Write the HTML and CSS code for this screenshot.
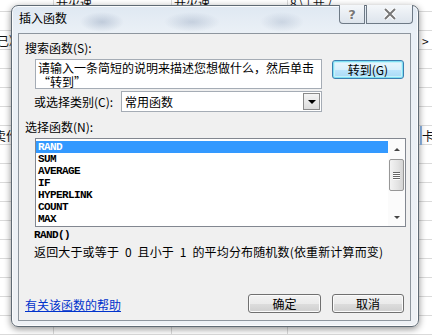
FILE: index.html
```html
<!DOCTYPE html>
<html lang="zh-CN">
    <head>
        <meta charset="UTF-8" />
        <title>插入函数</title>
        <link rel="stylesheet" href="styles.css">
    </head>
    <body>
        <div class="sheet">
            <div class="cell c-b r-1">开火速</div>
            <div class="cell c-c r-1">开火速</div>
            <div class="cell c-d r-1">8 \ | 卄 /</div>
            <div class="cell c-a r-3 peek">已》</div>
            <div class="cell c-e r-3">&gt;</div>
            <div class="cell c-a r-8 peek wide">卖作</div>
            <div class="cell c-e r-8 mark">卡&gt;</div>
        </div>

        <div class="dialog">
            <div class="titlebar">
                <span class="title">插入函数</span>
                <div class="caption">
                    <span class="cap-btn help">?</span>
                    <span class="cap-btn close">
                        <svg width="14" height="12" viewBox="0 0 14 12">
                            <path d="M2 1 L12 11 M12 1 L2 11" stroke="#fff" stroke-width="4" />
                            <path d="M2 1 L12 11 M12 1 L2 11" stroke="#777" stroke-width="2" />
                        </svg>
                    </span>
                </div>
            </div>

            <div class="client">
                <div class="label">搜索函数(S):</div>
                <div class="search-row">
                    <div class="textbox">请输入一条简短的说明来描述您想做什么，然后单击<br>“转到”</div>
                    <button class="btn focused" type="button">转到(G)</button>
                </div>

                <div class="cat-row">
                    <span class="cat-label">或选择类别(C):</span>
                    <div class="combo">
                        <span class="combo-text">常用函数</span>
                        <span class="combo-arrow"></span>
                    </div>
                </div>

                <div class="label pick">选择函数(N):</div>
                <div class="listbox">
                    <ul class="items">
                        <li class="selected">RAND</li>
                        <li>SUM</li>
                        <li>AVERAGE</li>
                        <li>IF</li>
                        <li>HYPERLINK</li>
                        <li>COUNT</li>
                        <li>MAX</li>
                    </ul>
                    <div class="scrollbar">
                        <span class="arrow up"></span>
                        <span class="thumb"><i></i><i></i><i></i><i></i></span>
                        <span class="arrow down"></span>
                    </div>
                </div>

                <div class="syntax">RAND()</div>
                <div class="desc">返回大于或等于 0 且小于 1 的平均分布随机数(依重新计算而变)</div>

                <div class="footer">
                    <a class="help-link" href="#">有关该函数的帮助</a>
                    <div class="buttons">
                        <button class="btn" type="button">确定</button>
                        <button class="btn" type="button">取消</button>
                    </div>
                </div>
            </div>
        </div>
    </body>
</html>
```

FILE: styles.css
```css
html {
    font-family: "Noto Sans CJK SC", "Noto Sans", sans-serif;
    font-size: 12px;
}

body {
    margin: 0;
    width: 432px;
    height: 335px;
    overflow: hidden;
    background: #fff;
    position: relative;
}

/* spreadsheet behind the dialog */
.sheet {
    display: grid;
    grid-template-columns: 54px 118px 116px 132px 1fr;
    grid-auto-rows: 19px;
    margin-top: -7px;
    height: 355px;
    background:
        linear-gradient(#dadada, #dadada) no-repeat 53px 0 / 1px 100%,
        linear-gradient(#dadada, #dadada) no-repeat 171px 0 / 1px 100%,
        linear-gradient(#dadada, #dadada) no-repeat 287px 0 / 1px 100%,
        repeating-linear-gradient(to bottom, transparent 0 18px, #dadada 18px 19px);
}

.cell {
    font-size: 12px;
    line-height: 19px;
    padding-left: 2px;
    color: #111;
    white-space: nowrap;
    overflow: hidden;
}

.cell.peek {
    padding-left: 0;
    margin-left: -3px;
    width: 20px;
}

.cell.peek.wide {
    margin-left: -6px;
}

.c-a { grid-column: 1; }
.c-b { grid-column: 2; }
.c-c { grid-column: 3; }
.c-d { grid-column: 4; }
.c-e { grid-column: 5; padding-left: 2px; }
.r-1 { grid-row: 1; }
.r-3 { grid-row: 3; }
.r-8 { grid-row: 8; }

.mark {
    background: linear-gradient(to right, #8fb8e8 0 2px, transparent 2px);
}

/* dialog window */
.dialog {
    position: absolute;
    left: 11px;
    top: 5px;
    width: 408px;
    height: 322px;
    box-sizing: border-box;
    border: 1px solid #5f6a74;
    border-radius: 7px;
    padding: 0 7px 5px 6px;
    display: flex;
    flex-direction: column;
    background:
        radial-gradient(ellipse 22px 10px at 90px 16px, rgba(120, 140, 170, 0.35), transparent),
        radial-gradient(ellipse 28px 10px at 180px 16px, rgba(120, 140, 170, 0.3), transparent),
        radial-gradient(ellipse 22px 10px at 270px 16px, rgba(120, 140, 170, 0.25), transparent),
        linear-gradient(180deg, #dfe8f2 0, #eaf0f6 26px, #eef1f5 100%);
    box-shadow: 0 2px 7px rgba(0, 0, 0, 0.45), inset 0 0 0 1px rgba(255, 255, 255, 0.8);
}

.titlebar {
    height: 27px;
    display: flex;
    justify-content: space-between;
    align-items: flex-start;
}

.title {
    margin: 5px 0 0 1px;
    line-height: 14px;
    color: #000;
}

.caption {
    display: flex;
    gap: 1px;
    margin: -1px -2px 0 0;
}

.cap-btn {
    height: 19px;
    box-sizing: border-box;
    border: 1px solid #6e7a86;
    border-top: none;
    display: flex;
    align-items: center;
    justify-content: center;
    background: linear-gradient(#f4f7fa, #dde4ec);
}

.help {
    width: 26px;
    border-radius: 0 0 0 4px;
    font: bold 13px "DejaVu Sans", sans-serif;
    color: #777;
    text-shadow: 0 0 1px #fff, 0 0 2px #fff;
}

.close {
    width: 47px;
    border-radius: 0 0 4px 0;
}

.client {
    flex: 1;
    background: #f0f0f0;
    border: 1px solid #8e969e;
    padding: 7px 6px 0 6px;
    display: flex;
    flex-direction: column;
}

.label {
    line-height: 14px;
}

.search-row {
    display: flex;
    gap: 10px;
    margin: 4px 0 0 10px;
    align-items: flex-start;
}

.textbox {
    width: 287px;
    height: 30px;
    box-sizing: border-box;
    border: 1px solid #a5acb5;
    background: #fff;
    padding: 1px 0 0 2px;
    line-height: 14px;
    overflow: hidden;
}

.btn {
    font-family: "Noto Sans CJK SC", sans-serif;
    font-size: 12px;
    line-height: 15px;
    width: 72px;
    height: 19px;
    padding: 0;
    border: 1px solid #707070;
    border-radius: 3px;
    color: #000;
    background: linear-gradient(#f2f2f2 0, #ebebeb 50%, #dddddd 51%, #cfcfcf 100%);
    box-shadow: inset 0 0 0 1px #fbfbfb;
}

.search-row .btn {
    margin-top: 1px;
}

.btn.focused {
    border-color: #3c7fb1;
    box-shadow: inset 0 0 0 1px #7fe0f3, inset 0 0 0 2px #c6f0f9;
    background: linear-gradient(#eaf6fd 0, #d9f0fc 50%, #bee6fd 51%, #a7d9f5 100%);
}

.cat-row {
    display: flex;
    align-items: center;
    margin: 2px 0 0 9px;
}

.cat-label {
    width: 87px;
    line-height: 14px;
}

.combo {
    width: 201px;
    height: 21px;
    box-sizing: border-box;
    border: 1px solid #a5acb5;
    background: #fff;
    display: flex;
    align-items: center;
    justify-content: space-between;
    padding: 0 1px 0 3px;
}

.combo-arrow {
    width: 17px;
    height: 17px;
    box-sizing: border-box;
    border: 1px solid #8a8a8a;
    background: linear-gradient(#f4f4f4, #dcdcdc);
    display: flex;
    align-items: center;
    justify-content: center;
}

.combo-arrow::after {
    content: "";
    border-left: 4px solid transparent;
    border-right: 4px solid transparent;
    border-top: 4px solid #000;
    margin-top: 1px;
}

.pick {
    margin-top: 8px;
}

.listbox {
    margin: 4px 0 0 10px;
    width: 371px;
    height: 89px;
    box-sizing: border-box;
    border: 1px solid #828790;
    background: #fff;
    display: flex;
}

.items {
    flex: 1;
    list-style: none;
    margin: 0;
    padding: 2px 0 0 0;
    font: bold 11px "Liberation Mono", monospace;
    letter-spacing: -0.6px;
    line-height: 12px;
    color: #000;
}

.items li {
    padding-left: 2px;
    height: 12px;
}

.items .selected {
    background: #3399ff;
    color: #fff;
}

.scrollbar {
    width: 17px;
    display: flex;
    flex-direction: column;
    align-items: center;
    background: #fbfbfb;
}

.arrow {
    height: 17px;
    width: 100%;
    display: flex;
    align-items: center;
    justify-content: center;
}

.arrow.up {
    margin-top: 2px;
}

.arrow.up::after,
.arrow.down::after {
    content: "";
    border-left: 3px solid transparent;
    border-right: 3px solid transparent;
}

.arrow.up::after {
    border-bottom: 3px solid #444;
}

.arrow.down::after {
    border-top: 3px solid #444;
}

.thumb {
    margin-top: 1px;
    width: 15px;
    height: 32px;
    box-sizing: border-box;
    border: 1px solid #979797;
    border-radius: 2px;
    background: linear-gradient(to right, #f3f3f3, #e3e3e3 60%, #d4d4d4);
    display: flex;
    flex-direction: column;
    align-items: center;
    justify-content: center;
    gap: 1px;
}

.thumb i {
    width: 7px;
    height: 1px;
    background: #666;
    box-shadow: 0 1px 0 #fff;
}

.scrollbar .down {
    margin-top: auto;
}

.syntax {
    margin: 2px 0 0 9px;
    font: bold 11px "Liberation Mono", monospace;
    letter-spacing: -0.6px;
    line-height: 13px;
}

.desc {
    margin: 3px 0 0 9px;
    line-height: 14px;
    word-spacing: 3px;
    letter-spacing: 0.15px;
}

.footer {
    margin-top: auto;
    padding-bottom: 7px;
    display: flex;
    align-items: center;
    justify-content: space-between;
}

.help-link {
    color: #0033cc;
    text-decoration: underline;
    line-height: 14px;
    margin-top: 2px;
}

.buttons {
    display: flex;
    gap: 11px;
}

.buttons .btn:first-child {
    width: 73px;
}
```
